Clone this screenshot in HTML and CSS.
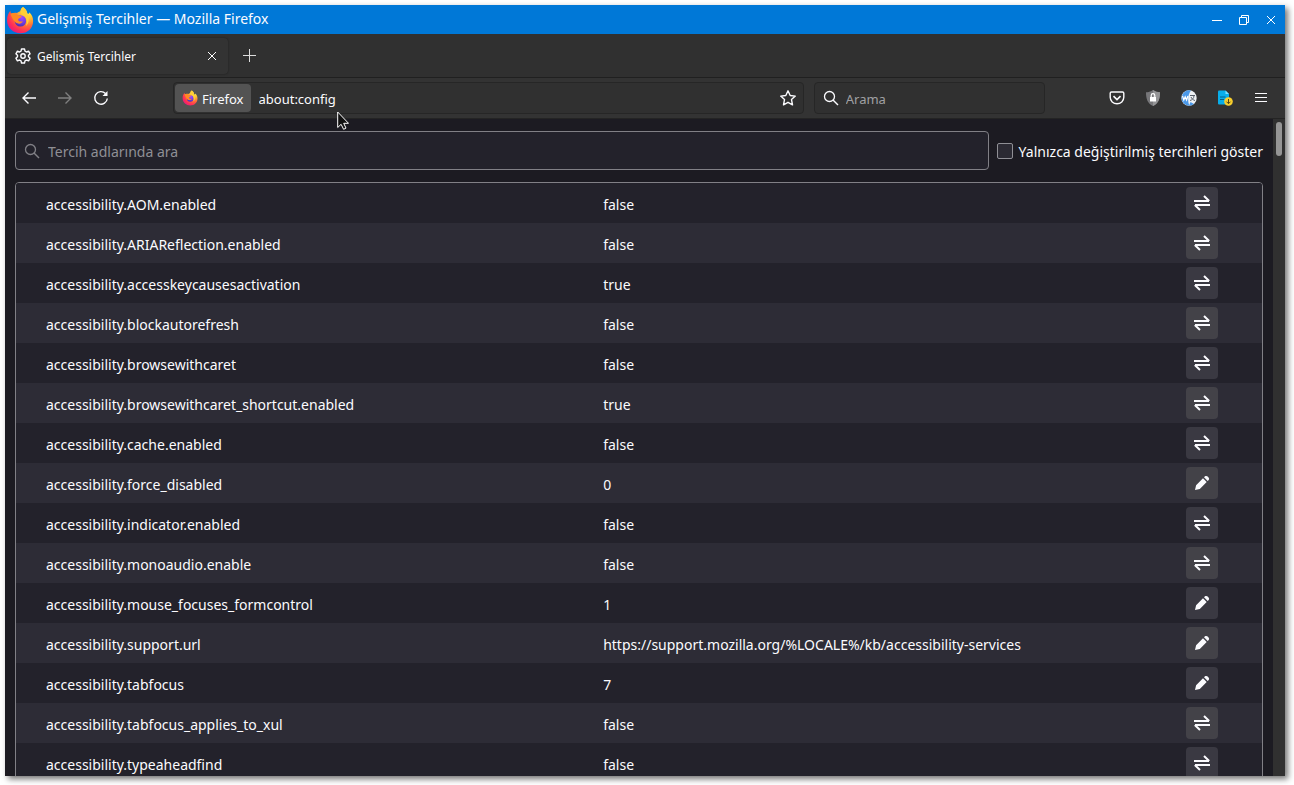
FILE: index.html
```html
<!DOCTYPE html>
<html lang="tr">
<head>
<meta charset="utf-8">
<title>Gelişmiş Tercihler</title>
<link rel="stylesheet" href="styles.css">
</head>
<body>
<svg class="defs" aria-hidden="true">
  <defs>
    <radialGradient id="flame" cx="0.8" cy="0.15" r="1">
      <stop offset="0" stop-color="#fff44f"/><stop offset="0.3" stop-color="#ffc030"/><stop offset="0.55" stop-color="#ff7139"/><stop offset="0.8" stop-color="#ff2f55"/><stop offset="1" stop-color="#e31587"/>
    </radialGradient>
    <radialGradient id="globe" cx="0.6" cy="0.2" r="0.9">
      <stop offset="0" stop-color="#a04bff"/><stop offset="0.6" stop-color="#6b3be0"/><stop offset="1" stop-color="#3a2e9e"/>
    </radialGradient>
  </defs>
  <symbol id="firefox" viewBox="0 0 32 32">
    <path fill="url(#flame)" d="M19.500 1c3 2 4.500 4.500 5 7.500 1.300.8 2 .2 1.800-1.500C29.800 9.500 31 13 31 17c0 8.500-6.500 14-14.500 14S1.500 25 1.200 17C1 12 2.500 8.500 5 5.500c0 1.500.5 2.500 1.200 3.200C8.500 7.500 11 7.500 12.500 8c1-1 2.500-1.500 4-2 .3-2 1.300-4 3-5z"/>
    <circle cx="16.500" cy="17" r="6.500" fill="url(#globe)"/>
    <path fill="#ff8a22" d="M5 9c3-1.500 6.500-1 8.500 1.200 1.500 1 3.500 1 4.500 1.600-.8 2-3.500 2.300-4 3.200-.3 1 .3 2 1.500 2.600 1.500.6 2.500-.3 4 .2-1.500 2-4 3-6.500 2C9.500 18.500 7 14 5 9z"/>
    <path fill="#ffcf38" d="M19.500 1c3 2 4.500 5 5 8.500 2.500 4.500 2 10.500-2 13.500 2-4 1.500-9-1.500-12-2.500-2-4.500-3-4.500-5 .3-2 1.300-4 3-5z"/>
  </symbol>
  <symbol id="swap" viewBox="0 0 16 16">
    <path d="M0 6h15M10 1l5.200 5M1 10h15M.8 10 6 15" fill="none" stroke="currentColor" stroke-width="2"/>
  </symbol>
  <symbol id="pencil" viewBox="0 0 16 16">
    <path fill="currentColor" d="M1 15l1.100-4.800L9 3.300l3.700 3.700L5.800 13.900zM10 2.300l1-1c1.900-1.600 5.300 1.800 3.700 3.700l-1 1z"/>
  </symbol>
  <symbol id="lens" viewBox="0 0 16 16">
    <circle cx="6.500" cy="6.500" r="5" fill="none" stroke="currentColor" stroke-width="1.300"/>
    <path d="M10 10l5 5" stroke="currentColor" stroke-width="1.400"/>
  </symbol>
</svg>

<div class="window">
  <header class="titlebar">
    <svg class="app-logo"><use href="#firefox"/></svg>
    <span class="window-title">Gelişmiş Tercihler — Mozilla Firefox</span>
    <div class="window-buttons">
      <button type="button" aria-label="Küçült"><svg viewBox="0 0 10 10"><path d="M0 5.500h10"/></svg></button>
      <button type="button" aria-label="Geri yükle"><svg viewBox="0 0 10 10"><path d="M.5 2.500h7v7h-7zM2.500 2.500v-2h7v7h-2"/></svg></button>
      <button type="button" aria-label="Kapat"><svg viewBox="0 0 10 10"><path d="M1 1l8 8M9 1L1 9"/></svg></button>
    </div>
  </header>

  <nav class="tabs" aria-label="Sekmeler">
    <div class="tab">
      <svg class="icon" viewBox="0 0 16 16" fill="none" stroke="currentColor" stroke-width="1.400" stroke-linejoin="round"><circle cx="8" cy="8" r="2.200"/><path d="M6.500 1h3l.5 2.200 1.400.8 2.200-.8 1.500 2.600L13.500 7.300v1.400l1.600 1.500-1.500 2.600-2.200-.8-1.400.8L9.500 15h-3L6 12.800 4.600 12l-2.200.8L.9 10.200l1.600-1.500V7.300L.9 5.800l1.500-2.600 2.200.8L6 3.200z"/></svg>
      <span class="tab-label">Gelişmiş Tercihler</span>
      <button class="tab-close" type="button" aria-label="Sekmeyi kapat"><svg viewBox="0 0 10 10"><path d="M1 1l8 8M9 1L1 9"/></svg></button>
    </div>
    <button class="new-tab" type="button" aria-label="Yeni sekme"><svg viewBox="0 0 13 13"><path d="M6.500 0v13M0 6.500h13"/></svg></button>
  </nav>

  <div class="toolbar">
    <div class="history">
      <button type="button" aria-label="Geri"><svg class="icon line" viewBox="0 0 16 16"><path d="M15 8H2M7.500 2.500L2 8l5.500 5.500"/></svg></button>
      <button type="button" aria-label="İleri" disabled><svg class="icon line" viewBox="0 0 16 16"><path d="M1 8h13M8.500 2.500L14 8l-5.500 5.500"/></svg></button>
      <button type="button" aria-label="Yenile"><svg class="icon line" viewBox="0 0 16 16"><path d="M12.500 3.500A6.300 6.300 0 1 0 14.300 8.500"/><path d="M14.500 1v5h-5z" fill="currentColor" stroke="none"/></svg></button>
    </div>
    <div class="address">
      <button class="identity" type="button"><svg class="icon"><use href="#firefox"/></svg><span>Firefox</span></button>
      <input class="url" type="text" value="about:config" aria-label="Adres">
      <button type="button" aria-label="Yer imi ekle"><svg class="icon line" viewBox="0 0 16 16" stroke-linejoin="round"><path d="M8 .8l2.200 4.700 5.100.6-3.800 3.500 1 5.200L8 12.300l-4.500 2.500 1-5.200L.7 6.100l5.100-.6z"/></svg></button>
    </div>
    <div class="search">
      <svg class="icon"><use href="#lens"/></svg>
      <input type="text" placeholder="Arama" aria-label="Arama">
    </div>
    <div class="extensions">
      <button type="button" aria-label="Pocket"><svg class="icon line" viewBox="0 0 16 16"><path d="M2.500 2h11q1.300 0 1.300 1.300v4a6.800 6.500 0 0 1-13.600 0v-4Q1.200 2 2.500 2z"/><path d="M4.500 6.200L8 9.500l3.500-3.300" stroke-width="1.700"/></svg></button>
      <button type="button" aria-label="Koruma"><svg class="icon" viewBox="0 0 16 16"><path fill="#77777a" d="M8 0q3 2.300 7 2.300C15 9 13.500 13.500 8 16 2.500 13.500 1 9 1 2.300 5 2.300 8 0 8 0z"/><path fill="#949496" d="M8 0q3 2.300 7 2.300C15 9 13.500 13.500 8 16z"/><path fill="#fff" d="M5 7h6v4.500H5z"/><path d="M6.200 7V5.500a1.800 1.800 0 0 1 3.600 0V7" fill="none" stroke="#fff" stroke-width="1.200"/></svg></button>
      <button type="button" aria-label="Çeviri"><svg class="icon" viewBox="0 0 16 16"><circle cx="8" cy="8" r="7.700" fill="#eef1f4"/><path fill="#4a98e8" d="M10 .5A7.700 7.700 0 1 0 8.500 15.700C6.500 11 6.500 5 10 .5z"/><path fill="#4a98e8" d="M13 13.900a7.700 7.700 0 0 1-5 1.800L9.500 12z"/><path d="M1.500 6l1.300 4 1.400-3.300L5.600 10l1.300-4" fill="none" stroke="#fff" stroke-width="1.200"/><path d="M9 5.500h5M13 5.500c0 3-2 4.500-4 5M10 7c.8 2 2.200 3 4 3.500" fill="none" stroke="#59616b"/></svg></button>
      <button type="button" aria-label="İndirme"><svg class="icon" viewBox="0 0 16 16"><path fill="#08aeea" d="M2 .5h6.500L12 4v10.500H2Q1 14.500 1 13.500v-12Q1 .5 2 .5z"/><path fill="#7fe0ff" d="M8.500.5L12 4H8.500z"/><path d="M3 7h5.500M3 9.500h4" stroke="#075f87"/><circle cx="11.500" cy="11.500" r="4.300" fill="#f8cf2d"/><path d="M11.500 9v4.500M9.500 11.700l2 2 2-2" fill="none" stroke="#4f4417"/></svg></button>
      <button type="button" aria-label="Menü"><svg class="icon" viewBox="0 0 16 16"><path d="M2 3.500h12M2 7.500h12M2 11.500h12" stroke="currentColor"/></svg></button>
    </div>
  </div>

  <div class="viewport">
    <main class="page">
      <div class="filter">
        <div class="filter-box">
          <svg class="icon"><use href="#lens"/></svg>
          <input type="text" placeholder="Tercih adlarında ara" aria-label="Tercih adlarında ara">
        </div>
        <input class="check" type="checkbox" id="modified">
        <label for="modified">Yalnızca değiştirilmiş tercihleri göster</label>
      </div>
      <div class="prefs">
        <table>
          <tbody>
            <tr><th scope="row">accessibility.AOM.enabled</th><td>false</td><td class="action"><button type="button" aria-label="Değiştir"><svg><use href="#swap"/></svg></button></td></tr>
            <tr><th scope="row">accessibility.ARIAReflection.enabled</th><td>false</td><td class="action"><button type="button" aria-label="Değiştir"><svg><use href="#swap"/></svg></button></td></tr>
            <tr><th scope="row">accessibility.accesskeycausesactivation</th><td>true</td><td class="action"><button type="button" aria-label="Değiştir"><svg><use href="#swap"/></svg></button></td></tr>
            <tr><th scope="row">accessibility.blockautorefresh</th><td>false</td><td class="action"><button type="button" aria-label="Değiştir"><svg><use href="#swap"/></svg></button></td></tr>
            <tr><th scope="row">accessibility.browsewithcaret</th><td>false</td><td class="action"><button type="button" aria-label="Değiştir"><svg><use href="#swap"/></svg></button></td></tr>
            <tr><th scope="row">accessibility.browsewithcaret_shortcut.enabled</th><td>true</td><td class="action"><button type="button" aria-label="Değiştir"><svg><use href="#swap"/></svg></button></td></tr>
            <tr><th scope="row">accessibility.cache.enabled</th><td>false</td><td class="action"><button type="button" aria-label="Değiştir"><svg><use href="#swap"/></svg></button></td></tr>
            <tr><th scope="row">accessibility.force_disabled</th><td>0</td><td class="action"><button type="button" aria-label="Düzenle"><svg><use href="#pencil"/></svg></button></td></tr>
            <tr><th scope="row">accessibility.indicator.enabled</th><td>false</td><td class="action"><button type="button" aria-label="Değiştir"><svg><use href="#swap"/></svg></button></td></tr>
            <tr><th scope="row">accessibility.monoaudio.enable</th><td>false</td><td class="action"><button type="button" aria-label="Değiştir"><svg><use href="#swap"/></svg></button></td></tr>
            <tr><th scope="row">accessibility.mouse_focuses_formcontrol</th><td>1</td><td class="action"><button type="button" aria-label="Düzenle"><svg><use href="#pencil"/></svg></button></td></tr>
            <tr><th scope="row">accessibility.support.url</th><td>https://support.mozilla.org/%LOCALE%/kb/accessibility-services</td><td class="action"><button type="button" aria-label="Düzenle"><svg><use href="#pencil"/></svg></button></td></tr>
            <tr><th scope="row">accessibility.tabfocus</th><td>7</td><td class="action"><button type="button" aria-label="Düzenle"><svg><use href="#pencil"/></svg></button></td></tr>
            <tr><th scope="row">accessibility.tabfocus_applies_to_xul</th><td>false</td><td class="action"><button type="button" aria-label="Değiştir"><svg><use href="#swap"/></svg></button></td></tr>
            <tr><th scope="row">accessibility.typeaheadfind</th><td>false</td><td class="action"><button type="button" aria-label="Değiştir"><svg><use href="#swap"/></svg></button></td></tr>
          </tbody>
        </table>
      </div>
    </main>
    <div class="scrollbar"><div class="thumb"></div></div>
  </div>
</div>
<svg class="pointer" viewBox="0 0 12 19" aria-hidden="true"><path d="M.7 1v15.500l3.400-3.200 2.500 5 2.400-1.200-2.300-4.800h4.800z" fill="#111" stroke="#fff"/></svg>
</body>
</html>
```
FILE: styles.css
```css
* { box-sizing: border-box; }
body {
  margin: 0;
  height: 100vh;
  padding: 5px 9px 9px 5px;
  background: #fff;
  color: #fbfbfe;
  font: 14px/20px "Noto Sans", sans-serif;
  overflow: hidden;
}
button, input { font: inherit; color: inherit; }
button { display: inline-flex; align-items: center; justify-content: center; padding: 0; border: 0; background: none; }
input[type="text"] { min-width: 0; flex: 1; padding: 2px 0 0; border: 0; background: none; outline: 0; }
.defs { position: absolute; width: 0; height: 0; }
.icon { width: 16px; height: 16px; flex: none; }
.line { fill: none; stroke: currentColor; stroke-width: 1.4; }

.window {
  height: 100%;
  display: flex;
  flex-direction: column;
  overflow: hidden;
  background: #1c1b22;
  box-shadow: 3px 3px 6px rgba(0, 0, 0, 0.55);
}
.titlebar { flex: none; height: 29px; display: flex; align-items: center; gap: 3px; padding: 0 8px 0 1px; background: #0078d7; }
.app-logo { width: 28px; height: 28px; }
.window-title { flex: 1; padding-bottom: 2px; }
.window-buttons { display: flex; gap: 15px; }
.window-buttons button { width: 12px; height: 20px; }
.window-buttons svg, .tab-close svg { width: 10px; height: 10px; fill: none; stroke: #fff; }

.tabs { flex: none; height: 44px; display: flex; align-items: center; padding: 0 2px; gap: 15px; background: #303030; border-bottom: 1px solid #202020; font-size: 12px; }
.tab { width: 221px; height: 36px; display: flex; align-items: center; gap: 6px; padding: 0 11px 0 8px; background: #333; border-radius: 4px; box-shadow: 0 0 2px #1c1c1c; }
.tab-label { flex: 1; padding-top: 2px; }
.new-tab svg { width: 13px; height: 13px; stroke: #ddd; }

.toolbar { flex: none; height: 41px; display: flex; align-items: center; padding: 0 16px; background: #333; border-bottom: 1px solid #242424; font-size: 13px; }
.history { display: flex; gap: 20px; width: 152px; }
.history button:disabled { color: #808080; }
.address, .search { height: 32px; display: flex; align-items: center; background: #303030; border: 1px solid #262626; border-radius: 4px; }
.address { flex: 620; gap: 8px; padding: 0 7px 0 1px; }
.identity { gap: 4px; height: 28px; padding: 0 7px; border-radius: 4px; background: #535353; }
.identity span { padding-top: 2px; }
.search { flex: 213; margin-left: 10px; padding: 0 8px; gap: 7px; }
input::placeholder { color: #a0a0a3; opacity: 1; }
.extensions { display: flex; gap: 20px; margin-left: 64px; }

.viewport { flex: 1; min-height: 0; display: flex; }
.page { flex: 1; min-width: 0; padding: 12px 10px 0; overflow: hidden; }
.filter { display: flex; align-items: center; margin-bottom: 12px; }
.filter label { padding-top: 2px; }
.filter-box { flex: 1; height: 39px; display: flex; align-items: center; gap: 8px; padding: 0 8px; margin-right: 8px; border: 1px solid #818086; border-radius: 4px; background: #23222b; color: #818086; }
.filter-box input::placeholder { color: #8f8f95; }
.check { appearance: none; width: 16px; height: 16px; margin: 0 6px 0 0; border: 1px solid #8f8f95; border-radius: 2px; background: #2b2a33; }
.prefs { border: 1px solid #818086; border-radius: 4px; overflow: hidden; }
table { width: 100%; table-layout: fixed; border-collapse: collapse; }
tr { height: 40px; background: #23222b; }
tr:nth-child(even) { background: #2d2c36; }
th, td { padding: 4px 0 0; text-align: left; font-weight: 400; }
th { width: 46%; padding-left: 30px; }
td { padding-left: 14px; }
.action { width: 76px; padding: 0; }
.action button { width: 32px; height: 32px; border-radius: 4px; background: #3a3942; vertical-align: middle; }
tr:nth-child(even) button { background: #434248; }
.action svg { width: 16px; height: 16px; }
.scrollbar { width: 12px; padding: 3px; background: #303030; }
.thumb { height: 34px; border-radius: 3px; background: #959595; }
.pointer { position: absolute; left: 337px; top: 111px; width: 12px; height: 19px; }
```
